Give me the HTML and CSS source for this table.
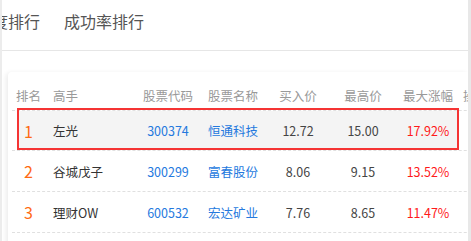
FILE: index.html
```html
<!DOCTYPE html>
<html lang="zh-CN">
<head>
<meta charset="utf-8">
<title>高手排行</title>
<link rel="stylesheet" href="styles.css">
</head>
<body>
<div class="page">
  <div class="tabs">
    <span class="tab">热度排行</span>
    <span class="tab">成功率排行</span>
  </div>
  <div class="panel">
    <span class="arrow"></span>
    <div class="table">
      <div class="row head">
        <span class="c">排名</span>
        <span class="l">高手</span>
        <span class="c">股票代码</span>
        <span class="c">股票名称</span>
        <span class="c">买入价</span>
        <span class="c">最高价</span>
        <span class="c">最大涨幅</span>
        <span class="l">操作</span>
      </div>
      <div class="row hl">
        <span class="c rank">1</span>
        <span class="l name">左光</span>
        <span class="c blue">300374</span>
        <span class="c blue">恒通科技</span>
        <span class="c num">12.72</span>
        <span class="c num">15.00</span>
        <span class="c red">17.92%</span>
        <span class="l"></span>
      </div>
      <div class="row r2">
        <span class="c rank">2</span>
        <span class="l name">谷城戊子</span>
        <span class="c blue">300299</span>
        <span class="c blue">富春股份</span>
        <span class="c num">8.06</span>
        <span class="c num">9.15</span>
        <span class="c red">13.52%</span>
        <span class="l"></span>
      </div>
      <div class="row r3">
        <span class="c rank">3</span>
        <span class="l name">理财OW</span>
        <span class="c blue">600532</span>
        <span class="c blue">宏达矿业</span>
        <span class="c num">7.76</span>
        <span class="c num">8.65</span>
        <span class="c red">11.47%</span>
        <span class="l"></span>
      </div>
    </div>
  </div>
</div>
</body>
</html>
```
FILE: styles.css
```css
html, body {
  margin: 0;
  padding: 0;
  background: #fff;
}
body {
  width: 471px;
  height: 241px;
  overflow: hidden;
  font-family: "Noto Sans CJK SC", "Microsoft YaHei", sans-serif;
}
.page {
  box-sizing: border-box;
  width: 471px;
  height: 241px;
  border-left: 2px solid #ececec;
  border-right: 3px solid #e8e8e8;
  overflow: hidden;
}
.tabs {
  display: flex;
  gap: 24px;
  height: 50px;
  margin-left: -26px;
  border-bottom: 1px solid #e6e6e6;
}
.tab {
  font-size: 16px;
  line-height: 42px;
  color: #555;
  white-space: nowrap;
}
.panel {
  position: relative;
  margin: 21px 0 0 6px;
  height: 200px;
  background: #fff;
  border-radius: 4px 0 0 0;
  box-shadow: -2px 1px 5px rgba(0, 0, 0, 0.08);
}
.arrow {
  position: absolute;
  left: -5px;
  top: 49px;
  width: 9px;
  height: 9px;
  background: #fff;
  transform: rotate(45deg);
  box-shadow: -1px 1px 4px rgba(0, 0, 0, 0.12);
  z-index: -1;
}
.table {
  margin-left: 4px;
  width: 520px;
}
.row {
  position: relative;
  display: grid;
  grid-template-columns: 33px 90px 66px 64px 66px 64px 66px 70px;
  align-items: center;
  font-size: 12.5px;
  border-bottom: 1px dashed #e0e0e0;
  box-sizing: border-box;
}
.row .c { text-align: center; }
.row .l { text-align: left; padding-left: 8px; white-space: nowrap; }
.row .l:last-child { padding-left: 2px; }
.head {
  height: 39px;
  padding-top: 9px;
  color: #999;
}
.hl {
  height: 40px;
  background: linear-gradient(#f4f4f4, #f4f4f4) 7px 0 / 438px 100% no-repeat;
}
.hl::after {
  content: "";
  position: absolute;
  left: 5px;
  width: 442px;
  top: -3px;
  bottom: 0;
  border: 2px solid #f53434;
  box-sizing: border-box;
  pointer-events: none;
}
.r2, .r3 { height: 41px; }
.rank {
  font-size: 16px;
  color: #ff6a13;
}
.name { color: #333; }
.blue { color: #2479de; }
.num { color: #444; }
.red { color: #ff1a1a; }
```
